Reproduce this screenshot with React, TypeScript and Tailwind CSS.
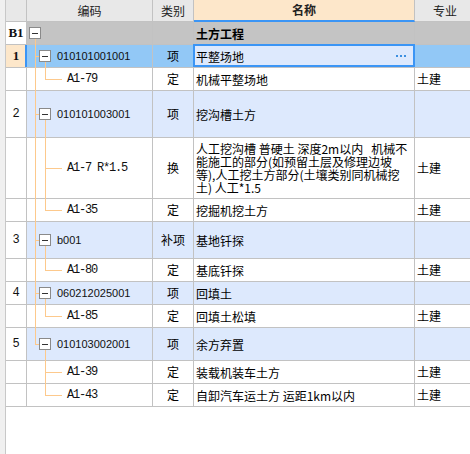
import React from "react";

type Kind = "group" | "item" | "child";

type Row = {
  kind: Kind;
  num?: string;
  code?: string;
  type?: string;
  name: string | string[];
  spec?: string;
  h: string;
  selected?: boolean;
  lastItem?: boolean;
  lastChild?: boolean;
  afterLastItem?: boolean;
};

const ROWS: Row[] = [
  { kind: "group", num: "B1", name: "土方工程", h: "h-[23px]" },
  { kind: "item", num: "1", code: "010101001001", type: "项", name: "平整场地", h: "h-[23px]", selected: true },
  { kind: "child", code: "A1-79", type: "定", name: "机械平整场地", spec: "土建", h: "h-[23px]", lastChild: true },
  { kind: "item", num: "2", code: "010101003001", type: "项", name: "挖沟槽土方", h: "h-[47px]" },
  {
    kind: "child",
    code: "A1-7 R*1.5",
    type: "换",
    name: [
      "人工挖沟槽 普硬土 深度2m以内   机械不",
      "能施工的部分(如预留土层及修理边坡",
      "等),人工挖土方部分(土壤类别同机械挖",
      "土) 人工*1.5",
    ],
    spec: "土建",
    h: "h-[61px]",
  },
  { kind: "child", code: "A1-35", type: "定", name: "挖掘机挖土方", spec: "土建", h: "h-[23px]", lastChild: true },
  { kind: "item", num: "3", code: "b001", type: "补项", name: "基地钎探", h: "h-[37px]" },
  { kind: "child", code: "A1-80", type: "定", name: "基底钎探", spec: "土建", h: "h-[23px]", lastChild: true },
  { kind: "item", num: "4", code: "060212025001", type: "项", name: "回填土", h: "h-[23px]" },
  { kind: "child", code: "A1-85", type: "定", name: "回填土松填", spec: "土建", h: "h-[23px]", lastChild: true },
  { kind: "item", num: "5", code: "010103002001", type: "项", name: "余方弃置", h: "h-[33px]", lastItem: true },
  { kind: "child", code: "A1-39", type: "定", name: "装载机装车土方", spec: "土建", h: "h-[23px]", afterLastItem: true },
  {
    kind: "child",
    code: "A1-43",
    type: "定",
    name: "自卸汽车运土方 运距1km以内",
    spec: "土建",
    h: "h-[23px]",
    afterLastItem: true,
    lastChild: true,
  },
];

const LINE = "bg-[#fdc98c]";

function ToggleBox({ left }: { left: string }) {
  return (
    <span
      className={`absolute top-1/2 -translate-y-1/2 ${left} flex h-[12px] w-[12px] items-center justify-center border border-[#8a8a8a] bg-white`}
    >
      <span className="h-px w-[6px] bg-[#333]" />
    </span>
  );
}

function CodeCell({ row, bg }: { row: Row; bg: string }) {
  return (
    <div className={`relative flex w-[126px] shrink-0 items-center border-r border-[#c2c2c2] ${bg}`}>
      {row.kind === "group" && (
        <>
          <span className={`absolute left-[8px] top-[calc(50%+6px)] -bottom-px w-px ${LINE}`} />
          <ToggleBox left="left-[2px]" />
        </>
      )}

      {row.kind === "item" && (
        <>
          <span
            className={`absolute left-[8px] top-0 w-px ${LINE} ${row.lastItem ? "h-1/2" : "-bottom-px"}`}
          />
          <span className={`absolute left-[8px] top-1/2 h-px w-[4px] ${LINE}`} />
          <span className={`absolute left-[18px] top-[calc(50%+6px)] -bottom-px w-px ${LINE}`} />
          <ToggleBox left="left-[12px]" />
          <span className="pl-[30px] font-['Liberation_Sans',sans-serif] text-[11px] text-[#111]">
            {row.code}
          </span>
        </>
      )}

      {row.kind === "child" && (
        <>
          {!row.afterLastItem && <span className={`absolute left-[8px] top-0 -bottom-px w-px ${LINE}`} />}
          <span
            className={`absolute left-[18px] top-0 w-px ${LINE} ${row.lastChild ? "h-1/2" : "-bottom-px"}`}
          />
          <span className={`absolute left-[18px] top-1/2 h-px w-[17px] ${LINE}`} />
          <span className="whitespace-pre pl-[40px] font-['Liberation_Mono',monospace] text-[12px] tracking-[-1.2px] text-[#111]">
            {row.code}
          </span>
        </>
      )}
    </div>
  );
}

function NumCell({ row }: { row: Row }) {
  const bold = row.kind === "group" || row.selected;
  return (
    <div
      className={`flex w-[21px] shrink-0 items-center justify-center border-r ${
        row.selected
          ? "border-[#3b95f5] bg-[#fde7ca] shadow-[inset_-1px_0_0_#3b95f5]"
          : "border-[#c2c2c2] bg-white"
      } ${
        bold
          ? "font-['Liberation_Serif',serif] text-[13px] font-bold"
          : "font-['Liberation_Mono',monospace] text-[12px]"
      } text-[#111]`}
    >
      {row.num}
    </div>
  );
}

function TableRow({ row }: { row: Row }) {
  const bg =
    row.kind === "group"
      ? "bg-[#c4c4c4]"
      : row.kind === "item"
      ? row.selected
        ? "bg-[#92c8f6]"
        : "bg-[#dde9fd]"
      : "bg-white";
  const lines = Array.isArray(row.name) ? row.name : [row.name];

  return (
    <div className={`flex ${row.h} border-b border-[#c2c2c2]`}>
      <NumCell row={row} />
      <CodeCell row={row} bg={bg} />
      <div
        className={`flex w-[41px] shrink-0 items-center justify-center border-r border-[#c2c2c2] text-[12px] ${bg}`}
      >
        {row.type}
      </div>
      <div
        className={`relative flex w-[221px] shrink-0 items-center border-r border-[#c2c2c2] pl-[2px] text-[12px] ${
          row.selected ? "bg-[#dde9fd]" : bg
        } ${row.kind === "group" ? "font-bold" : ""}`}
      >
        <div className="flex flex-col">
          {lines.map((l, i) => (
            <span key={i} className="h-[13px] whitespace-pre leading-[13px]">
              {l}
            </span>
          ))}
        </div>
        {row.selected && (
          <>
            <span className="ml-auto mr-[8px] flex gap-[2px]">
              <span className="h-[2px] w-[2px] bg-[#3c8fe0]" />
              <span className="h-[2px] w-[2px] bg-[#3c8fe0]" />
              <span className="h-[2px] w-[2px] bg-[#3c8fe0]" />
            </span>
            <span className="pointer-events-none absolute -left-px -top-px -right-px bottom-0 border-2 border-[#3b95f5]" />
          </>
        )}
      </div>
      <div className={`flex w-[60px] shrink-0 items-center pl-[2px] text-[12px] ${bg}`}>{row.spec}</div>
    </div>
  );
}

export default function App() {
  return (
    <div className="flex h-[454px] w-[470px] overflow-hidden bg-white font-['Noto_Sans_CJK_SC',sans-serif] text-black">
      <div className="w-[6px] shrink-0 border-r border-[#c8c8c8] bg-[#f0f0f0]" />
      <div className="flex min-w-0 flex-1 flex-col">
        {/* header */}
        <div className="flex h-[22px] text-[12px] text-[#222]">
          <div className="w-[21px] shrink-0 border-b border-r border-[#c2c2c2] bg-[#e8e8e8]" />
          <div className="flex w-[126px] shrink-0 items-center justify-center border-b border-r border-[#c2c2c2] bg-[#e8e8e8]">
            编码
          </div>
          <div className="flex w-[41px] shrink-0 items-center justify-center border-b border-r border-[#c2c2c2] bg-[#e8e8e8]">
            类别
          </div>
          <div className="flex w-[221px] shrink-0 items-center justify-center border-b-2 border-r border-b-[#3b95f5] border-r-[#c2c2c2] bg-[#fde7ca] font-bold">
            名称
          </div>
          <div className="flex w-[60px] shrink-0 items-center justify-center border-b border-[#c2c2c2] bg-[#e8e8e8]">
            专业
          </div>
        </div>
        {ROWS.map((r, i) => (
          <TableRow key={i} row={r} />
        ))}
      </div>
    </div>
  );
}
